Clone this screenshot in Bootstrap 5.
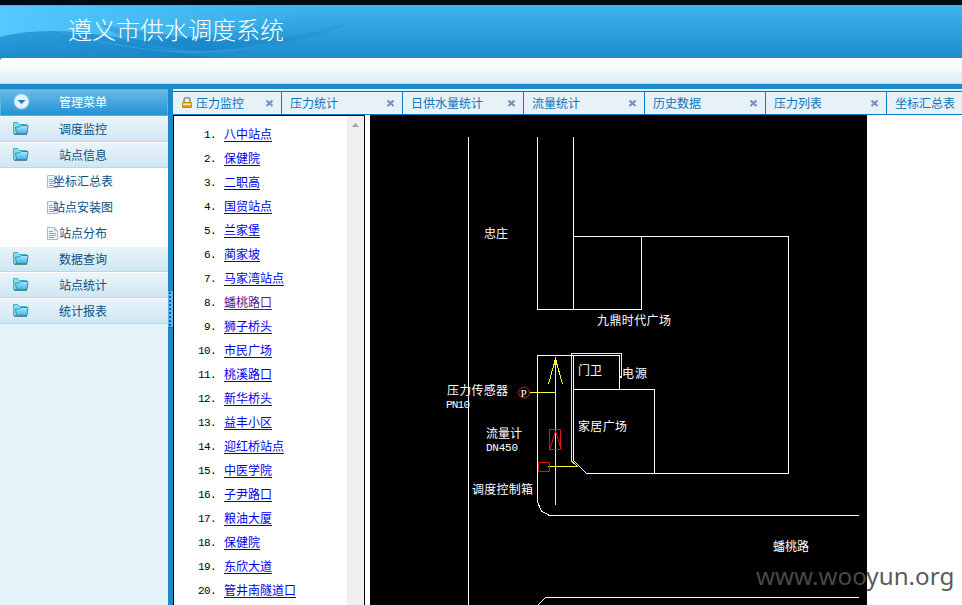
<!DOCTYPE html>
<html lang="zh-CN">
<head>
<meta charset="utf-8">
<title>遵义市供水调度系统</title>
<link href="https://cdn.jsdelivr.net/npm/bootstrap@5.3.0/dist/css/bootstrap.min.css" rel="stylesheet">
<style>
body{font:12px/26px "Liberation Sans","Noto Sans CJK SC",sans-serif;color:#000;background:#1a8aca}
.app{height:605px}
.top-strip{height:6px;background:#000a16;border-bottom:1px solid #8297ad}
.banner{height:52px;background:linear-gradient(#3cb5ec,#1c8bcb)}
.banner svg{left:0;top:0}
.banner-title{left:68px;top:8px;font:24px/34px "Liberation Serif","Noto Sans CJK SC",sans-serif;font-weight:300;color:#fff}
.toolbar-band{height:26px;border-bottom:1px solid #b9dfef;border-top-left-radius:3px;background:linear-gradient(#fff,#fafdfe 25%,#dcecf3)}
.workspace{margin-top:5px;min-height:0}
.side{width:168px;background:#e5f2f9;color:#0a4f86}
.side-head{height:27px;color:#fff;background:linear-gradient(#6bb9e6,#2293d4);border:1px solid #55b4e3;border-bottom-color:#4fb8dc;padding-left:12px}
.group-item{height:26px;padding-left:12px;background:linear-gradient(#e9f4f9,#cfe7f3);border-top:1px solid #fff;border-bottom:1px solid #b5daea}
.group-item span{margin-left:30px;line-height:22px;padding-top:2px}
.side-head span{margin-left:29px}
.side-head svg{margin-top:-2px}
.group-item svg{margin-top:-1px}
.leaf{height:26px;padding-left:47px;background:#fff}
.leaf svg{margin-top:1px}
.leaf span{margin-left:1px;line-height:24px;padding-top:2px}
.leaf .tight{margin-left:-5px}
.leaves{height:78px;background:#fff}
.splitter{width:5px}
.grip{left:0;top:201px;width:5px;height:38px;background:radial-gradient(circle,#135f9e 0 .8px,transparent 1px) 0 0/4px 4px,#5ab6ea;border-top:1px solid #1273b5;border-bottom:1px solid #1273b5}
.main{background:#fff;min-width:0}
.tabs-row{height:26px;padding-top:2px;background:linear-gradient(#f4faff 0 1px,#cfe4f5 1px 3px);min-width:0}
.tabs-inner{border-top:1px solid #0d7ac6;border-bottom:1px solid #0d7ac6;background:#e6f2f8;height:24px}
.tab{width:121px;flex:none;height:22px;line-height:22px;border-right:1px solid #0d7ac6;padding:1px 7px 0 8px;color:#0d74bd}
.tab svg{margin-top:-1px}
.tab-home{width:109px;padding-left:8px;padding-right:7px}
.tab-home .lbl{margin-right:auto;margin-left:3px}
.list-pane{width:192px;border:solid #000;border-width:1px 1px 0}
.stations{padding:7px 0 0 26px;line-height:24px}
.stations li{height:24px;display:flex}
.stations b{width:16px;font:11px/24px "Liberation Mono",monospace;letter-spacing:-.6px;flex:none;display:flex;justify-content:flex-end}
.stations a{color:#00e;margin-left:8px;text-decoration:underline;text-underline-offset:2px}
.stations .seen{color:#551a8b}
.scrollbar{width:17px;background:#f0f0f0}
.map{margin-left:5px;width:497px;background:#000}
.wm{left:756px;top:558px;font:24.200px/36px "Noto Sans","Open Sans",sans-serif;color:rgba(78,78,78,.95);white-space:nowrap}
svg{display:block;flex:none}
</style>
<script src="https://cdn.jsdelivr.net/npm/bootstrap@5.3.0/dist/js/bootstrap.bundle.min.js"></script>
</head>
<body class="overflow-hidden">
<svg width="0" height="0" class="position-absolute">
<defs>
<linearGradient id="fg" x2="0" y2="1"><stop stop-color="#a9eafa"/><stop offset="1" stop-color="#41b4dc"/></linearGradient>
<linearGradient id="gold" x2="0" y2="1"><stop stop-color="#ffd23e"/><stop offset="1" stop-color="#d98600"/></linearGradient>
<symbol id="folder" viewBox="0 0 17 15"><path d="M1.500 12.500v-11h4l1.500 2h7.500v9z" fill="#8adcf3" stroke="#3fafd2"/><path d="M4.500 12.500l-1-6.500h4l1.500-1.500h7l-1 8z" fill="url(#fg)" stroke="#2391ba"/><path d="M2 13.500h13" stroke="#456c7a" stroke-opacity=".8"/></symbol>
<symbol id="page" viewBox="0 0 11 13"><path d="M.5.5h7l3 3v9H.5z" fill="#eef6fd" stroke="#9bbddc"/><path d="M7.500 .5v3h3" fill="#cfe2f3" stroke="#9bbddc"/><path d="M2 4.500h4M2 6.500h7M2 8.500h7M2 10.500h5" stroke="#7fadd9"/></symbol>
<symbol id="close" viewBox="0 0 9 9"><path d="M1.500 1.500l6 5.500M7.500 1.500l-6 5.500" stroke="#7394b8" stroke-width="2.200"/></symbol>
</defs>
</svg>
<div class="app d-flex flex-column position-relative">
  <div class="top-strip"></div>
  <header class="banner position-relative">
    <svg class="position-absolute" width="420" height="52">
      <defs><linearGradient id="glow"><stop stop-color="#55c9ff"/><stop offset=".35" stop-color="#4dc3fa" stop-opacity=".8"/><stop offset="1" stop-color="#45bff0" stop-opacity="0"/></linearGradient>
      <linearGradient id="wave"><stop stop-color="#1c8dd0" stop-opacity=".1"/><stop offset=".5" stop-color="#1480c6" stop-opacity=".6"/><stop offset="1" stop-color="#1480c6" stop-opacity="0"/></linearGradient></defs>
      <path d="M0 0H330Q230 35 140 34Q90 27 60 25Q25 24 0 31Z" fill="url(#glow)"/>
      <path d="M0 31Q25 24 60 25C100 26 150 44 210 45Q300 44 380 5Q310 32 250 34Q170 33 100 18C130 40 180 50 230 52H0Z" fill="url(#wave)"/>
      <path d="M0 5Q60 30 130 41Q200 53 270 38" fill="none" stroke="#5cc5ee" stroke-opacity=".35"/>
    </svg>
    <div class="banner-title position-absolute">遵义市供水调度系统</div>
  </header>
  <div class="toolbar-band"></div>
  <div class="workspace d-flex flex-grow-1">
    <nav class="side flex-shrink-0">
      <div class="side-head d-flex align-items-center">
        <svg width="17" height="17"><circle cx="8.500" cy="8.500" r="7.500" fill="#e2f1fa" stroke="#94cbeb"/><path d="M4.500 7h8l-4 4z" fill="#1982bd"/></svg><span>管理菜单</span>
      </div>
      <div class="group-item d-flex align-items-center"><svg width="17" height="15"><use href="#folder"/></svg><span>调度监控</span></div>
      <div class="group-item d-flex align-items-center"><svg width="17" height="15"><use href="#folder"/></svg><span>站点信息</span></div>
      <div class="leaves">
        <div class="leaf d-flex align-items-center"><svg width="11" height="13"><use href="#page"/></svg><span class="tight">坐标汇总表</span></div>
        <div class="leaf d-flex align-items-center"><svg width="11" height="13"><use href="#page"/></svg><span class="tight">站点安装图</span></div>
        <div class="leaf d-flex align-items-center"><svg width="11" height="13"><use href="#page"/></svg><span>站点分布</span></div>
      </div>
      <div class="group-item d-flex align-items-center"><svg width="17" height="15"><use href="#folder"/></svg><span>数据查询</span></div>
      <div class="group-item d-flex align-items-center"><svg width="17" height="15"><use href="#folder"/></svg><span>站点统计</span></div>
      <div class="group-item d-flex align-items-center"><svg width="17" height="15"><use href="#folder"/></svg><span>统计报表</span></div>
    </nav>
    <div class="splitter flex-shrink-0 position-relative"><div class="grip position-absolute"></div></div>
    <main class="main flex-grow-1 d-flex flex-column">
      <div class="tabs-row flex-shrink-0 overflow-hidden">
        <div class="tabs-inner d-flex">
          <div class="tab tab-home d-flex align-items-center justify-content-between"><svg width="12" height="13"><path d="M3 6V3.500a3 3 0 0 1 6 0V6" fill="none" stroke="#8b8d92" stroke-width="1.600"/><path d="M1.500 5.500h9v5h-9z" fill="url(#gold)" stroke="#c98a14"/><path d="M2 7.500h8" stroke="#fff0a0"/></svg><span class="lbl">压力监控</span><svg width="9" height="9"><use href="#close"/></svg></div>
          <div class="tab d-flex align-items-center justify-content-between"><span>压力统计</span><svg width="9" height="9"><use href="#close"/></svg></div>
          <div class="tab d-flex align-items-center justify-content-between"><span>日供水量统计</span><svg width="9" height="9"><use href="#close"/></svg></div>
          <div class="tab d-flex align-items-center justify-content-between"><span>流量统计</span><svg width="9" height="9"><use href="#close"/></svg></div>
          <div class="tab d-flex align-items-center justify-content-between"><span>历史数据</span><svg width="9" height="9"><use href="#close"/></svg></div>
          <div class="tab d-flex align-items-center justify-content-between"><span>压力列表</span><svg width="9" height="9"><use href="#close"/></svg></div>
          <div class="tab d-flex align-items-center"><span>坐标汇总表</span></div>
        </div>
      </div>
      <div class="d-flex flex-grow-1 overflow-hidden">
        <section class="list-pane d-flex flex-shrink-0">
          <ol class="stations list-unstyled mb-0 flex-grow-1">
            <li><b>1.</b><a href="#">八中站点</a></li>
            <li><b>2.</b><a href="#">保健院</a></li>
            <li><b>3.</b><a href="#">二职高</a></li>
            <li><b>4.</b><a href="#">国贸站点</a></li>
            <li><b>5.</b><a href="#">兰家堡</a></li>
            <li><b>6.</b><a href="#">蔺家坡</a></li>
            <li><b>7.</b><a href="#">马家湾站点</a></li>
            <li><b>8.</b><a href="#" class="seen">蟠桃路口</a></li>
            <li><b>9.</b><a href="#">狮子桥头</a></li>
            <li><b>10.</b><a href="#">市民广场</a></li>
            <li><b>11.</b><a href="#">桃溪路口</a></li>
            <li><b>12.</b><a href="#">新华桥头</a></li>
            <li><b>13.</b><a href="#">益丰小区</a></li>
            <li><b>14.</b><a href="#">迎红桥站点</a></li>
            <li><b>15.</b><a href="#">中医学院</a></li>
            <li><b>16.</b><a href="#">子尹路口</a></li>
            <li><b>17.</b><a href="#">粮油大厦</a></li>
            <li><b>18.</b><a href="#">保健院</a></li>
            <li><b>19.</b><a href="#">东欣大道</a></li>
            <li><b>20.</b><a href="#">管井南隧道口</a></li>
          </ol>
          <div class="scrollbar"><svg width="17" height="17"><path d="M5 11l3.500-4 3.500 4z" fill="#a3a3a3"/></svg></div>
        </section>
        <section class="map flex-shrink-0">
          <svg width="497" height="490" viewBox="370 115 497 490">
            <g fill="none" stroke="#fff" shape-rendering="crispEdges">
              <path d="M468.500 137V605M537.500 137V309.500H641.500V236.500M573.500 137V309.500M573.500 236.500H788.500V473.500H586.500L573.500 460.500V355M537.500 355.500H619.500V389.500M573.500 389.500H654.500V473.500M537.500 355V502L541.500 511 549.500 515.500H859M538 605L545.500 597.500H859"/>
              <path stroke="#ffff3c" d="M555.500 505V360M548.500 384L555.500 359 562.500 384M530 392.500H555.500M548 466.500H577.500L571.500 461V353.500H621.500V377M554.500 360v5M556.500 360v5"/>
            </g>
            <g fill="none" stroke="#d81818"><circle cx="524" cy="392.500" r="5.500"/><path d="M549.500 429.500h11v20h-11zM550 449L555.500 431 561 449M538.500 462.500h11v9h-11z"/></g>
            <path d="M619 376h3v2h-3z" fill="#fff"/>
            <g fill="#fff" font-family="'Liberation Sans','Noto Sans CJK SC',sans-serif" font-size="12">
              <text x="484" y="238">忠庄</text>
              <text x="597" y="325" textLength="74">九鼎时代广场</text>
              <text x="578" y="375">门卫</text>
              <text x="622" y="378" textLength="25">电源</text>
              <text x="447" y="395" textLength="61">压力传感器</text>
              <text x="486" y="438">流量计</text>
              <text x="578" y="431" textLength="49">家居广场</text>
              <text x="472" y="494" textLength="61">调度控制箱</text>
              <text x="773" y="551">蟠桃路</text>
            </g>
            <g fill="#fff" font-family="'Liberation Mono',monospace" font-size="11">
              <text x="446" y="408" textLength="24">PN10</text>
              <text x="486" y="451" textLength="32">DN450</text>
              <text x="520.500" y="396.500" font-family="'Liberation Serif',serif" font-size="11">P</text>
            </g>
          </svg>
        </section>
      </div>
    </main>
  </div>
  <div class="wm position-absolute">www.wooyun.org</div>
</div>
</body>
</html>
